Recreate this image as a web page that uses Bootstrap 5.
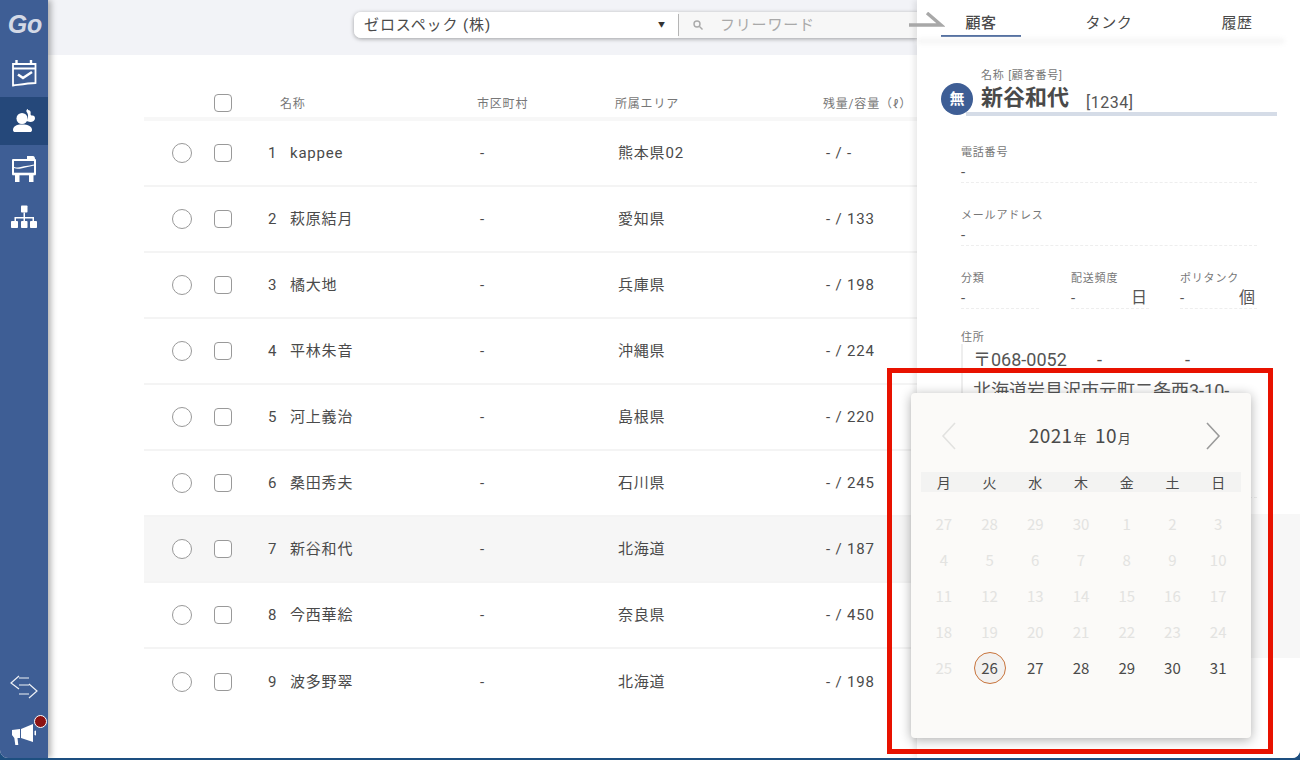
<!DOCTYPE html>
<html lang="ja">
<head>
  <meta charset="UTF-8">
  <meta name="viewport" content="width=device-width, initial-scale=1.0">
  <title>顧客一覧</title>
  <link href="https://cdn.jsdelivr.net/npm/bootstrap@5.3.5/dist/css/bootstrap.min.css" rel="stylesheet">
  <style>
    html, body { height: 100%; }
    body { overflow: hidden; background: #1d4f80; color: #4a4a4a; font-family: Roboto, "Noto Sans CJK JP", sans-serif; font-size: 15px; }
    .app-shell { height: 758px; background: #fff; border-radius: 0 0 8px 8px; overflow: hidden; }

    /* sidebar */
    .side-bar { width: 48px; flex: none; background: #3e5e95; box-shadow: 3px 0 6px rgba(0,0,0,.3); z-index: 3; }
    .side-logo { height: 49px; padding-left: 2px; color: #d3d9e6; font: italic bold 25px "Liberation Sans", sans-serif; }
    .side-item { height: 48px; }
    .side-item.is-active { background: #25487a; }
    .side-foot { position: relative; }
    .foot-swap { height: 54px; padding-top: 19px; }
    .foot-horn { height: 48px; padding-top: 12px; }
    .side-dot { position: absolute; left: 34px; top: 5px; width: 13px; height: 13px; border-radius: 50%; background: #8c1212; border: 1px solid #fff; }

    /* top bar */
    .top-bar { height: 55px; background: #f2f3f7; padding-left: 306px; padding-top: 12px; }
    .search-box { width: 620px; height: 26px; background: #f7f7f7; border-radius: 7px; box-shadow: 0 1px 4px rgba(0,0,0,.35); }
    .search-pick { width: 324px; padding-left: 10px; padding-right: 12px; background: #fff; border-radius: 7px 0 0 7px; letter-spacing: .9px; }
    .search-caret { font-size: 7px; color: #333; }
    .search-free { border-left: 1px solid #b5b5b5; margin: 2px 0; padding-left: 14px; color: #a9a9a9; gap: 17px; letter-spacing: .8px; }

    /* list */
    .list-wrap { padding-left: 96px; padding-top: 39px; }
    .list-head { height: 27px; font-size: 12px; line-height: 20px; color: #777; border-bottom: 4px solid #f7f7f7; letter-spacing: .8px; }
    .list-row { height: 66px; border-bottom: 2px solid #f4f4f4; letter-spacing: .8px; }
    .list-row:last-child { border-bottom: 0; }
    .list-row.is-current { background: #f6f6f6; }
    .cell-radio { width: 70px; padding-left: 28px; }
    .cell-check { width: 54px; }
    .cell-no { width: 22px; }
    .cell-name { width: 190px; }
    .head-name { width: 209px; padding-left: 12px; }
    .cell-city { width: 138px; }
    .head-city { width: 138px; }
    .cell-area { width: 208px; }
    .head-area { width: 208px; }
    .mark-radio { display: block; width: 20px; height: 20px; border: 1px solid #999; border-radius: 50%; background: #fff; }
    .mark-check { display: block; width: 18px; height: 18px; border: 1px solid #999; border-radius: 4px; background: #fff; }

    /* customer panel */
    .cust-panel { position: absolute; left: 917px; top: 0; width: 383px; height: 758px; background: #fff; box-shadow: -3px 0 6px rgba(0,0,0,.09); z-index: 2; }
    .cust-arrow { position: absolute; left: -8px; top: 12px; }
    .cust-tabs { height: 37px; padding-left: 24px; padding-top: 14px; gap: 48px; }
    .cust-tab { width: 80px; height: 23px; line-height: 19px; text-align: center; letter-spacing: .6px; }
    .cust-tab.is-on { border-bottom: 2px solid #3e5e95; font-weight: 500; }
    .tabs-shade { height: 6px; width: 368px; margin-top: 1px; background: #f6f6f6; border-radius: 0 4px 4px 0; filter: blur(2px); }
    .cust-name-block { padding: 26px 23px 0 24px; position: relative; height: 75px; }
    .cust-badge { position: absolute; left: 24px; top: 39px; width: 32px; height: 32px; background: #3e5e95; color: #fff; border-radius: 50%; font-size: 15px; font-weight: 700; z-index: 1; }
    .cust-name-label { font-size: 11px; color: #777; line-height: 12px; padding-left: 40px; letter-spacing: .8px; }
    .cust-name-line { padding-left: 16px; height: 34px; border-bottom: 4px solid #d5dce7; margin-left: 25px; }
    .cust-name { font-size: 22px; font-weight: 700; line-height: 26px; margin-left: -1px; margin-top: 3px; }
    .cust-no { font-size: 16px; margin-left: 17px; margin-top: 9px; letter-spacing: .5px; color: #555; }
    .cust-form { padding: 0 43px 0 44px; }
    .field-label { font-size: 11px; line-height: 14px; color: #777; letter-spacing: .8px; }
    .field-value { height: 23px; line-height: 24px; border-bottom: 1px dashed #eee; font-size: 15px; color: #555; }
    .field-value span + span { font-size: 16px; color: #555; padding-right: 2px; }
    .field-gap { margin-top: 26px; }
    .addr-label { margin-top: 22px; }
    .addr-box { border-left: 2px solid #eee; padding-left: 10px; height: 150px; margin-top: -1px; font-size: 18px; line-height: 31px; color: #555; }
    .addr-bottom { position: absolute; left: 44px; right: 43px; top: 497px; border-bottom: 1px dashed #eee; }
    .panel-band { position: absolute; left: 0; right: 0; top: 514px; height: 144px; background: #f7f7f7; }

    /* calendar */
    .date-pop { position: absolute; left: 911px; top: 393px; width: 340px; height: 345px; padding: 0 10px; background: #fbfaf8; border-radius: 4px; box-shadow: 0 2px 12px rgba(0,0,0,.32); z-index: 4; font-family: "Noto Sans CJK JP", sans-serif; }
    .date-head { height: 79px; padding: 29px 20px 0 20px; }
    .date-title { font-size: 19px; line-height: 25px; letter-spacing: .4px; margin-left: -2px; }
    .date-title small { font-size: 13px; margin-left: 1px; margin-right: 8px; }
    .date-title small:last-child { margin-right: 0; }
    .date-week { height: 20px; background: #f3f3f2; font-size: 14px; line-height: 20px; margin-bottom: 14px; }
    .date-grid { display: grid; grid-template-columns: repeat(7, 1fr); justify-items: center; }
    .date-day { width: 32px; height: 36px; display: flex; align-items: center; justify-content: center; font-size: 15px; }
    .date-day.is-off { color: #e3e3e1; }
    .date-day.is-today span { display: flex; align-items: center; justify-content: center; width: 32px; height: 32px; flex: none; border: 1px solid #c8743c; border-radius: 50%; background: #f2f1f0; }

    /* red marker around the picker */
    .pick-frame { position: absolute; left: 887px; top: 368px; width: 386px; height: 386px; border: 5px solid #e81200; z-index: 5; pointer-events: none; }
  </style>
</head>
<body>
  <div class="app-shell d-flex position-relative">

    <!-- sidebar -->
    <nav class="side-bar d-flex flex-column">
      <div class="side-logo d-flex align-items-center justify-content-center">Go</div>
      <div class="side-item d-flex align-items-center justify-content-center">
        <svg width="26" height="28" viewBox="11 59 26 28" fill="none" stroke="#fff" stroke-width="1.800"><path d="M13 64h22.500v19c-8 .3-15 1.500-22.500 2.500z"/><path d="M13 68.500h22.500" stroke-width="2"/><path d="M16.500 60v5M31 60v5" stroke-width="2.400"/><path d="M18 74.500l5 3.500 9-6" stroke-width="2.600"/></svg>
      </div>
      <div class="side-item is-active d-flex align-items-center justify-content-center">
        <svg width="24" height="24" viewBox="12 109 24 24" fill="#fff"><circle cx="22" cy="118.500" r="5.500"/><path d="M13 130c0-3.500 3-5.500 9-5.500 6.500 0 10 2 10 5.500 0 1.500-1 2-2 2H15c-1 0-2-.5-2-2z"/><path d="M28 110c2 0 3 1.500 2.600 3.500-.2 1.200.5 2 1.900 2.100 1.700.1 2.500 1.200 2.500 2.700 0 2.200-2 3.700-4.800 3.700-1.500 0-2.700-.5-3.700-1.200 1-1.500 1.500-3 1.500-5 0-1.500-.5-2.800-1.500-4-.5-1 .3-2.800 1.500-2.800z"/></svg>
      </div>
      <div class="side-item d-flex align-items-center justify-content-center">
        <svg width="26" height="28" viewBox="11 155 26 28" fill="none" stroke="#fff" stroke-width="2"><path d="M13 160h22v14H13z" stroke-linejoin="round"/><path d="M14 167.500c5 1.500 7 0 10-.5 4-.5 7-1 10-2" stroke-width="1.300"/><path d="M12.500 174h23" stroke-width="2.600"/><path fill="#fff" stroke="none" d="M27 156h6c1 0 2 1 2 3h-8zM15 175h4.500v7H15zM29 175h4.500v7H29z"/></svg>
      </div>
      <div class="side-item d-flex align-items-center justify-content-center">
        <svg width="26" height="24" viewBox="11 205.500 26 24" fill="#fff"><rect x="21" y="206" width="6.500" height="7" rx=".8"/><rect x="11" y="221.500" width="7" height="7" rx=".8"/><rect x="21" y="221.500" width="6.500" height="7" rx=".8"/><rect x="30" y="221.500" width="7" height="7" rx=".8"/><path d="M23.500 213h1.500v4.500h9v4h-1.500v-2.500H25v2.500h-1.500V219H16v2.500h-1.500v-4h9z"/></svg>
      </div>
      <div class="flex-grow-1"></div>
      <div class="side-foot foot-swap d-flex justify-content-center">
        <svg width="28" height="25" viewBox="10 675 28 25" fill="none" stroke="#eef1f6" stroke-width="1.200"><path d="M19 676l-8 7 8 6M19 678h10M19 685h10M29 684l8 7-8 7M19 694h10"/></svg>
      </div>
      <div class="side-foot foot-horn d-flex justify-content-center">
        <svg width="28" height="25" viewBox="10 722 28 25" fill="#fff"><path d="M12 730l8-1v9h-2.500l.8 7h-3l-1-7-2.300-3z"/><path d="M21 729l12-5v18l-12-4z"/><path d="M34.500 731l1.500-.5v5l-1.500-.5z"/></svg>
        <span class="side-dot"></span>
      </div>
    </nav>

    <!-- main -->
    <main class="flex-grow-1 d-flex flex-column">
      <div class="top-bar">
        <div class="search-box d-flex">
          <div class="search-pick d-flex align-items-center justify-content-between">
            <span>ゼロスペック (株)</span><span class="search-caret">▼</span>
          </div>
          <div class="search-free d-flex align-items-center flex-grow-1">
            <svg width="10" height="10" viewBox="0 0 10 10" fill="none" stroke="#aaa" stroke-width="1.400"><circle cx="4" cy="4" r="3"/><path d="M6.500 6.500L9.500 9.500"/></svg>
            <span>フリーワード</span>
          </div>
        </div>
      </div>

      <div class="list-wrap">
        <div class="list-head d-flex align-items-start">
          <div class="cell-radio"></div>
          <div class="cell-check"><span class="mark-check"></span></div>
          <div class="head-name">名称</div>
          <div class="head-city">市区町村</div>
          <div class="head-area">所属エリア</div>
          <div>残量/容量（ℓ）</div>
        </div>
        <div id="listRows"></div>
      </div>
    </main>

    <!-- customer panel -->
    <aside class="cust-panel">
      <svg class="cust-arrow" width="36" height="16" viewBox="0 0 36 16" fill="none" stroke="#a8a8a8" stroke-width="3.400"><path d="M0 13h32L18 1"/></svg>
      <div class="cust-tabs d-flex">
        <div class="cust-tab is-on">顧客</div>
        <div class="cust-tab">タンク</div>
        <div class="cust-tab">履歴</div>
      </div>
      <div class="tabs-shade"></div>
      <div class="cust-name-block">
        <div class="cust-badge d-flex align-items-center justify-content-center">無</div>
        <div class="cust-name-label">名称 [顧客番号]</div>
        <div class="cust-name-line d-flex">
          <span class="cust-name">新谷和代</span><span class="cust-no">[1234]</span>
        </div>
      </div>
      <div class="cust-form">
        <div class="field-label" style="margin-top:27px">電話番号</div>
        <div class="field-value">-</div>
        <div class="field-gap field-label">メールアドレス</div>
        <div class="field-value">-</div>
        <div class="row g-0 field-gap">
          <div class="col-auto" style="width:110px">
            <div class="field-label">分類</div>
            <div class="field-value" style="width:78px">-</div>
          </div>
          <div class="col-auto" style="width:109px">
            <div class="field-label">配送頻度</div>
            <div class="field-value d-flex justify-content-between" style="width:78px"><span>-</span><span>日</span></div>
          </div>
          <div class="col-auto" style="width:77px">
            <div class="field-label">ポリタンク</div>
            <div class="field-value d-flex justify-content-between"><span>-</span><span>個</span></div>
          </div>
        </div>
        <div class="addr-label field-label">住所</div>
        <div class="addr-box">
          <div class="d-flex"><span style="width:124px">〒068-0052</span><span style="width:88px">-</span><span>-</span></div>
          <div>北海道岩見沢市元町二条西3-10-</div>
        </div>
      </div>
      <div class="addr-bottom"></div>
      <div class="panel-band"></div>
    </aside>

    <!-- calendar -->
    <div class="date-pop">
      <div class="date-head d-flex justify-content-between">
        <svg width="16" height="28" viewBox="0 0 16 28" fill="none" stroke="#e2e2e0" stroke-width="1.600"><path d="M14 1L2 14l12 13"/></svg>
        <div class="date-title">2021<small>年</small>10<small>月</small></div>
        <svg width="16" height="28" viewBox="0 0 16 28" fill="none" stroke="#9a9a9a" stroke-width="1.600"><path d="M2 1l12 13L2 27"/></svg>
      </div>
      <div class="date-week date-grid">
        <span>月</span><span>火</span><span>水</span><span>木</span><span>金</span><span>土</span><span>日</span>
      </div>
      <div class="date-grid" id="dayGrid"></div>
    </div>
    <div class="pick-frame"></div>
  </div>

  <script src="https://cdn.jsdelivr.net/npm/bootstrap@5.3.5/dist/js/bootstrap.bundle.min.js"></script>
  <script>
    const clientes = [
      ['kappee', '熊本県02', '-'], ['萩原結月', '愛知県', '133'], ['橘大地', '兵庫県', '198'],
      ['平林朱音', '沖縄県', '224'], ['河上義治', '島根県', '220'], ['桑田秀夫', '石川県', '245'],
      ['新谷和代', '北海道', '187'], ['今西華絵', '奈良県', '450'], ['波多野翠', '北海道', '198']
    ];
    document.getElementById('listRows').innerHTML = clientes.map((c, i) => `
      <div class="list-row d-flex align-items-center${i === 6 ? ' is-current' : ''}">
        <div class="cell-radio"><span class="mark-radio"></span></div>
        <div class="cell-check"><span class="mark-check"></span></div>
        <div class="cell-no">${i + 1}</div>
        <div class="cell-name">${c[0]}</div>
        <div class="cell-city">-</div>
        <div class="cell-area">${c[1]}</div>
        <div>- / ${c[2]}</div>
      </div>`).join('');

    const dias = [27, 28, 29, 30];
    for (let d = 1; d <= 31; d++) dias.push(d);
    document.getElementById('dayGrid').innerHTML = dias.map((d, i) => {
      if (i === 29) return `<div class="date-day is-today"><span>${d}</span></div>`;
      return `<div class="date-day${i < 29 ? ' is-off' : ''}">${d}</div>`;
    }).join('');
  </script>
</body>
</html>
